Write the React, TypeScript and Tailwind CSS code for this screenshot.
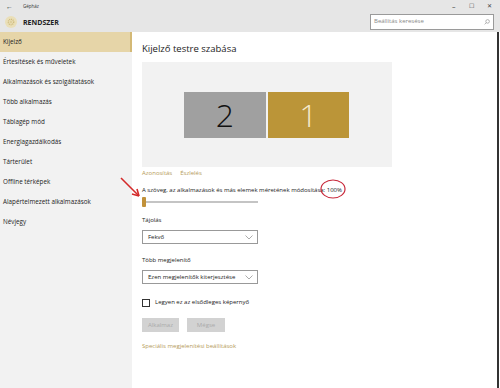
const menu = [
  "Kijelző",
  "Értesítések és műveletek",
  "Alkalmazások és szolgáltatások",
  "Több alkalmazás",
  "Táblagép mód",
  "Energiagazdálkodás",
  "Tárterület",
  "Offline térképek",
  "Alapértelmezett alkalmazások",
  "Névjegy",
];

function Chevron() {
  return (
    <svg width="8" height="5" viewBox="0 0 8 5" className="text-[#888]">
      <path d="M0.5 0.5 L4 4 L7.5 0.5" fill="none" stroke="currentColor" strokeWidth="0.7" />
    </svg>
  );
}

function Select({ label, value }: { label: string; value: string }) {
  return (
    <div className="flex flex-col">
      <span className="text-[6px] leading-[10px] text-[#222]">{label}</span>
      <div className="mt-[5px] w-[116px] h-[14px] border border-[#999] flex items-center justify-between pl-[5px] pr-[4px] text-[6px] text-[#222]">
        <span>{value}</span>
        <Chevron />
      </div>
    </div>
  );
}

export default function App() {
  return (
    <div
      className="relative w-[500px] h-[388px] flex flex-col bg-white overflow-hidden"
      style={{ fontFamily: '"Open Sans", "Noto Sans", sans-serif' }}
    >
      {/* Header */}
      <div className="h-[32px] bg-[#e6e6e6] flex flex-col shrink-0">
        <div className="h-[12px] flex items-center pl-[6px] text-[#333]">
          <span className="text-[7px] leading-none w-[17px]">←</span>
          <span className="text-[4.5px] leading-none">Gépház</span>
          <div className="ml-auto flex items-center text-[7px] leading-none text-[#444]">
            <span className="w-[17px]">–</span>
            <span className="w-[18px] text-[6px]">☐</span>
            <span className="w-[13px] text-[6px]">✕</span>
          </div>
        </div>
        <div className="flex-1 flex items-center pl-[5px]">
          <div className="w-[12px] h-[12px] rounded-full bg-[#eadfb8] flex items-center justify-center">
            <svg width="8" height="8" viewBox="0 0 16 16">
              <circle cx="8" cy="8" r="5.5" fill="none" stroke="#cdb878" strokeWidth="2.5" strokeDasharray="2 1.6" />
              <circle cx="8" cy="8" r="2" fill="none" stroke="#cdb878" strokeWidth="1" />
            </svg>
          </div>
          <span className="ml-[6px] text-[7px] font-bold text-[#222] leading-none">RENDSZER</span>
          <div className="ml-auto mr-[6px] -mt-[1px] w-[124px] h-[16px] bg-white border border-[#9a9a9a] flex items-center justify-between px-[3px]">
            <span className="text-[6px] text-[#888]">Beállítás keresése</span>
            <svg width="6" height="6" viewBox="0 0 10 10">
              <circle cx="6" cy="4" r="3" fill="none" stroke="#888" strokeWidth="1" />
              <path d="M4 6 L1 9" stroke="#888" strokeWidth="1" />
            </svg>
          </div>
        </div>
      </div>

      <div className="flex flex-1 min-h-0">
        {/* Sidebar */}
        <div className="w-[132px] bg-[#f2f2f2] flex flex-col shrink-0">
          {menu.map((m, i) => (
            <div
              key={m}
              className={`h-[20px] flex items-center pl-[3px] text-[6.3px] text-[#222] ${
                i === 0 ? "bg-[#e6d5a8] border-r-2 border-[#d4b976]" : ""
              }`}
            >
              {m}
            </div>
          ))}
        </div>

        {/* Content */}
        <div className="flex-1 pl-[10px] pt-[9px] flex flex-col border-r-2 border-[#333] mr-[1px]">
          <h1 className="text-[9.5px] leading-[15px] text-[#222]">Kijelző testre szabása</h1>

          <div className="mt-[6px] w-[250px] h-[105px] bg-[#f2f2f2] flex items-center justify-center">
            <div className="flex gap-[2px] -ml-[1px]">
              <div className="w-[82px] h-[46px] bg-[#a0a0a0] flex items-center justify-center text-[32px] font-light text-[#111] leading-none">
                2
              </div>
              <div className="w-[81px] h-[46px] bg-[#bb9538] flex items-center justify-center text-[32px] font-light text-[#f6eacb] leading-none">
                1
              </div>
            </div>
          </div>

          <div className="mt-[2px] flex gap-[8px] text-[6px] leading-[8px] text-[#b59b5a]">
            <span>Azonosítás</span>
            <span>Észlelés</span>
          </div>

          <div className="mt-[8px] text-[6px] leading-[10px] text-[#222]">
            A szöveg, az alkalmazások és más elemek méretének módosítása: 100%
          </div>

          <div className="mt-[2px] w-[116px] h-[10px] flex items-center">
            <div className="w-[4px] h-[10px] rounded-[1px] bg-[#c1913a]" />
            <div className="flex-1 h-[2px] bg-[#c4c4c4]" />
          </div>

          <div className="mt-[8px]">
            <Select label="Tájolás" value="Fekvő" />
          </div>
          <div className="mt-[11px]">
            <Select label="Több megjelenítő" value="Ezen megjelenítők kiterjesztése" />
          </div>

          <div className="mt-[14px] flex items-center gap-[5px]">
            <div className="w-[8px] h-[8px] border border-[#333] bg-white" />
            <span className="text-[6px] text-[#222]">Legyen ez az elsődleges képernyő</span>
          </div>

          <div className="mt-[11px] flex gap-[8px]">
            <div className="w-[37px] h-[14px] bg-[#d2d2d2] flex items-center justify-center text-[6px] text-[#aaa]">
              Alkalmaz
            </div>
            <div className="w-[38px] h-[14px] bg-[#d2d2d2] flex items-center justify-center text-[6px] text-[#aaa]">
              Mégse
            </div>
          </div>

          <div className="mt-[10px] text-[6px] text-[#b59b5a]">Speciális megjelenítési beállítások</div>
        </div>
      </div>

      {/* Red annotations */}
      <svg className="absolute left-0 top-0 pointer-events-none" width="500" height="388">
        <path d="M121 178 L139 196" stroke="#d42a2a" strokeWidth="1.6" fill="none" />
        <path d="M139 196 L132 194 M139 196 L137 189" stroke="#d42a2a" strokeWidth="1.6" fill="none" />
        <ellipse cx="333" cy="189" rx="12" ry="9" fill="none" stroke="#c8283a" strokeWidth="1.2" />
      </svg>
    </div>
  );
}
